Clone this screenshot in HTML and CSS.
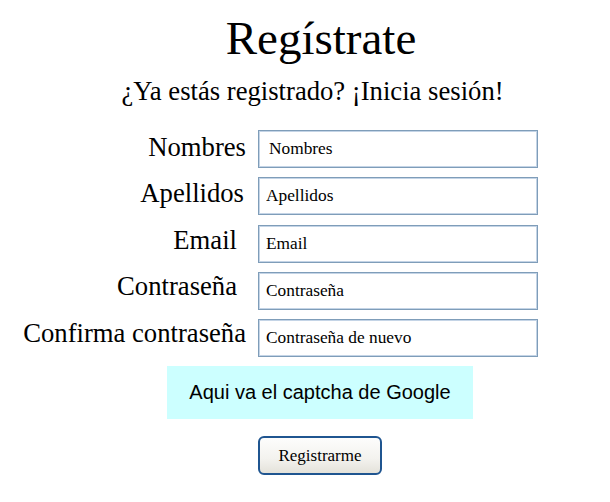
FILE: index.html
```html
<!DOCTYPE html>
<html lang="es">
<head>
<meta charset="utf-8">
<title>Regístrate</title>
<link rel="stylesheet" href="styles.css">
</head>
<body>
<main class="page">
  <h1 class="title">Regístrate</h1>
  <p class="subtitle">¿Ya estás registrado? ¡Inicia sesión!</p>
  <form class="form">
    <div class="labels">
      <label class="label" for="nombres">Nombres</label>
      <label class="label label--a" for="apellidos">Apellidos</label>
      <label class="label label--b" for="email">Email</label>
      <label class="label label--b" for="pass">Contraseña</label>
      <label class="label" for="pass2">Confirma contraseña</label>
    </div>
    <div class="fields">
      <input class="field field--first" id="nombres" type="text" placeholder="Nombres">
      <input class="field" id="apellidos" type="text" placeholder="Apellidos">
      <input class="field" id="email" type="text" placeholder="Email">
      <input class="field" id="pass" type="text" placeholder="Contraseña">
      <input class="field" id="pass2" type="text" placeholder="Contraseña de nuevo">
    </div>
  </form>
  <div class="centered">
    <div class="captcha">Aqui va el captcha de Google</div>
  </div>
  <div class="centered actions">
    <button class="btn" type="button">Registrarme</button>
  </div>
</main>
</body>
</html>
```

FILE: styles.css
```css
html, body {
  margin: 0;
  padding: 0;
  background: #ffffff;
}

.page {
  font-family: "Liberation Serif", "Times New Roman", serif;
  color: #000;
  padding-top: 10px;
}

.title {
  margin: 0;
  font-size: 47px;
  font-weight: normal;
  line-height: 56px;
  text-align: center;
  padding-left: 32px;
}

.subtitle {
  margin: 10px 0 0;
  font-size: 26.67px;
  line-height: 30px;
  text-align: center;
  padding-left: 15px;
}

.form {
  display: flex;
  align-items: flex-start;
  margin-top: 18px;
  padding-left: 8px;
}

.labels {
  width: 238px;
  display: flex;
  flex-direction: column;
  align-items: flex-end;
}

.label {
  display: block;
  font-size: 26.67px;
  line-height: 46.4px;
  white-space: nowrap;
}

.label--a { padding-right: 2px; }
.label--b { padding-right: 9px; }

.fields {
  margin-left: 12px;
  padding-top: 6px;
  display: flex;
  flex-direction: column;
  gap: 9.25px;
}

.field {
  box-sizing: border-box;
  width: 280px;
  height: 38px;
  margin: 0;
  padding: 0 0 0 7px;
  border: 1px solid #7f9db9;
  box-shadow: inset 0 0 0 1px #c4d4e6;
  border-radius: 0;
  background: #fff;
  font-family: "Liberation Serif", "Times New Roman", serif;
  font-size: 17.33px;
  color: #000;
  outline: none;
}

.field--first { padding-left: 10px; }

.field::placeholder {
  color: #000;
  opacity: 1;
}

.centered {
  display: flex;
  justify-content: center;
  padding-left: 30px;
}

.captcha {
  margin-top: 9px;
  width: 306px;
  height: 53px;
  box-sizing: border-box;
  background: #ccffff;
  display: flex;
  align-items: center;
  justify-content: center;
  font-family: "Liberation Sans", Arial, sans-serif;
  font-size: 20px;
}

.actions {
  margin-top: 17px;
}

.btn {
  box-sizing: border-box;
  width: 124px;
  height: 39px;
  border: 2px solid #1f5590;
  border-radius: 6px;
  background: linear-gradient(#fdfdfc 0%, #f3f2ee 60%, #e4e2da 100%);
  font-family: "Liberation Serif", "Times New Roman", serif;
  font-size: 17px;
  color: #000;
  padding: 0;
}
```
